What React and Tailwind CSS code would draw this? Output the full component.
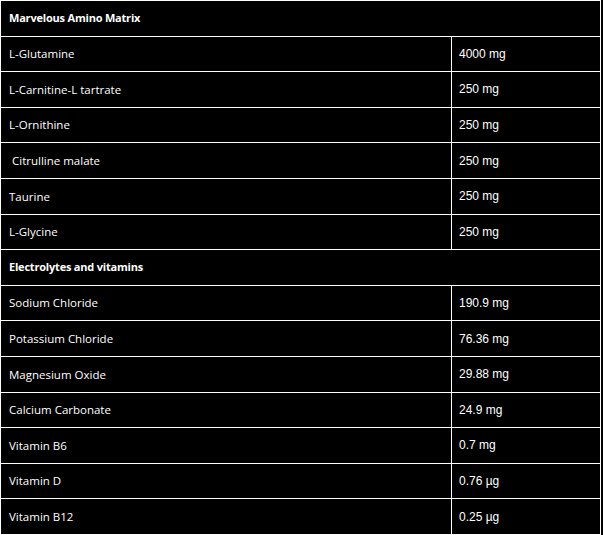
import React from 'react';

const sections = [
  {
    title: 'Marvelous Amino Matrix',
    rows: [
      ['L-Glutamine', '4000 mg'],
      ['L-Carnitine-L tartrate', '250 mg'],
      ['L-Ornithine', '250 mg'],
      ['\u00a0Citrulline malate', '250 mg'],
      ['Taurine', '250 mg'],
      ['L-Glycine', '250 mg'],
    ],
  },
  {
    title: 'Electrolytes and vitamins',
    rows: [
      ['Sodium Chloride', '190.9 mg'],
      ['Potassium Chloride', '76.36 mg'],
      ['Magnesium Oxide', '29.88 mg'],
      ['Calcium Carbonate', '24.9 mg'],
      ['Vitamin B6', '0.7 mg'],
      ['Vitamin D', '0.76 µg'],
      ['Vitamin B12', '0.25 µg'],
    ],
  },
];

export default function App() {
  return (
    <div className="w-[603px] h-[535px] bg-black overflow-hidden">
      <div className="w-[601px] border-t border-l border-r border-white text-white">
        {sections.map((section) => (
          <React.Fragment key={section.title}>
            <div className="h-[35.6px] flex items-center border-b border-white px-[8px] font-['Open_Sans',sans-serif] font-bold text-[11px] tracking-[-0.2px]">
              {section.title}
            </div>
            {section.rows.map(([name, amount]) => (
              <div key={name} className="h-[35.6px] flex border-b border-white">
                <div className="w-[451px] flex items-center px-[8px] border-r border-white font-['Open_Sans',sans-serif] text-[11.5px]">
                  {name}
                </div>
                <div className="flex-1 flex items-center px-[7px] font-['Liberation_Sans',Arial,sans-serif] text-[12px]">
                  {amount}
                </div>
              </div>
            ))}
          </React.Fragment>
        ))}
      </div>
    </div>
  );
}
